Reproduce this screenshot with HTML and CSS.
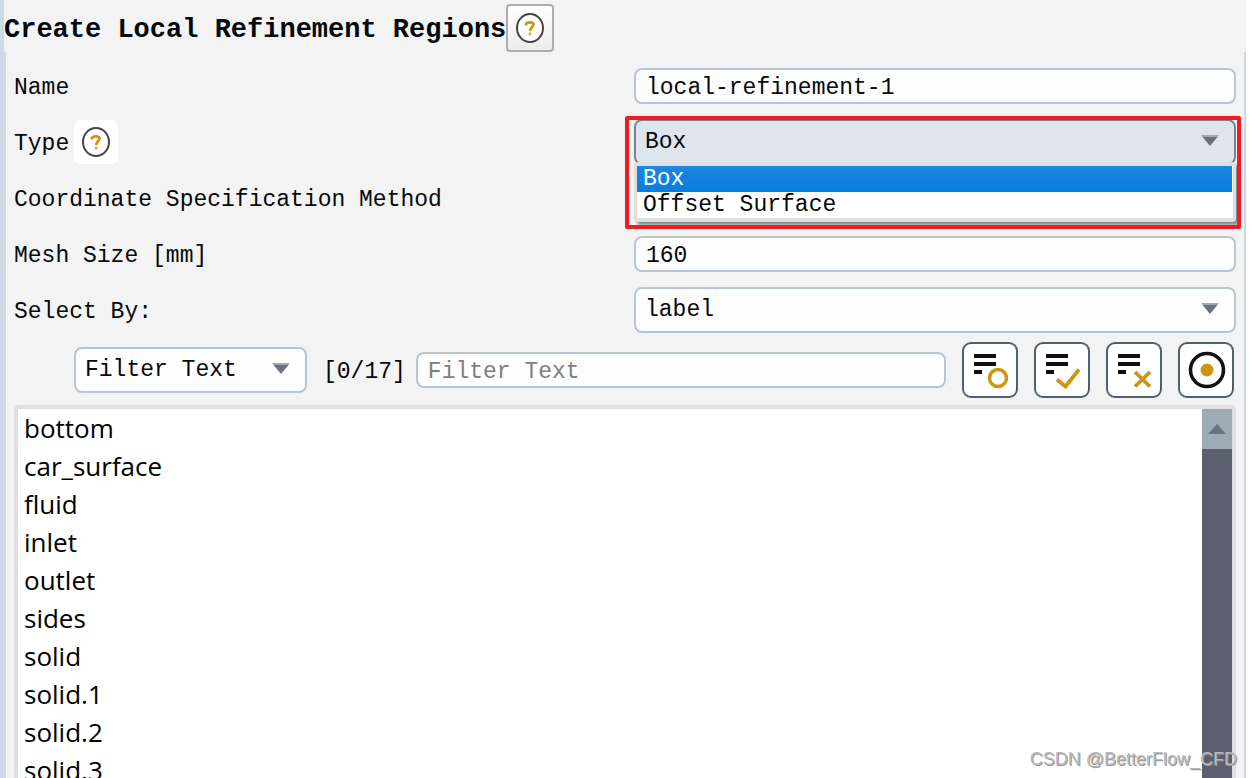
FILE: index.html
```html
<!DOCTYPE html>
<html lang="en">
<head>
<meta charset="utf-8">
<title>Create Local Refinement Regions</title>
<link rel="stylesheet" href="styles.css">
</head>
<body>
<svg class="defs" aria-hidden="true">
  <symbol id="help" viewBox="0 0 32 32">
    <ellipse cx="16" cy="16" rx="13" ry="14" fill="#fff" stroke="#444" stroke-width="2"/>
    <path d="M12 13.500V12C13 10 19.500 9.500 19.500 12.500C19.500 15 16.500 15.500 16 19" fill="none" stroke="#cf9410" stroke-width="2.800"/>
    <path d="M14.800 20.500h2.400v3h-2.400z" fill="#dba93a"/>
  </symbol>
  <symbol id="lines" viewBox="0 0 52 52">
    <path d="M10 10h22v4H10zM10 18h22v4H10zM10 26h8v4h-8z" fill="#111"/>
  </symbol>
</svg>
<div class="panel">
  <header class="head">
    <h1>Create Local Refinement Regions</h1>
    <button class="help help-raised" type="button" aria-label="Help"><svg><use href="#help"/></svg></button>
  </header>
  <main class="body">
    <form class="form">
      <div class="row">
        <label class="text" for="name">Name</label>
        <input class="field" id="name" type="text" value="local-refinement-1">
      </div>
      <div class="row">
        <div class="label-group">
          <label class="text" for="type">Type</label>
          <button class="help help-flat" type="button" aria-label="Type help"><svg><use href="#help"/></svg></button>
        </div>
        <div class="combo">
          <select class="select select-open" id="type"><option>Box</option><option>Offset Surface</option></select>
          <ul class="menu" role="listbox" aria-label="Type">
            <li role="option" aria-selected="true">Box</li>
            <li role="option" aria-selected="false">Offset Surface</li>
          </ul>
          <div class="highlight"></div>
        </div>
      </div>
      <div class="row">
        <span class="text">Coordinate Specification Method</span>
      </div>
      <div class="row">
        <label class="text" for="mesh">Mesh Size [mm]</label>
        <input class="field" id="mesh" type="text" value="160">
      </div>
      <div class="row">
        <label class="text" for="by">Select By:</label>
        <select class="select" id="by"><option>label</option></select>
      </div>
    </form>
    <div class="toolbar">
      <select class="select filter-kind" aria-label="Filter kind"><option>Filter Text</option></select>
      <span class="text count">[0/17]</span>
      <input class="field filter" type="text" placeholder="Filter Text" aria-label="Filter Text">
      <div class="tools">
        <button class="tool" type="button" aria-label="Deselect all"><svg viewBox="0 0 52 52"><use href="#lines"/><circle cx="34" cy="34" r="8.500" fill="none" stroke="#cf9410" stroke-width="3.500"/></svg></button>
        <button class="tool" type="button" aria-label="Select all"><svg viewBox="0 0 52 52"><use href="#lines"/><path d="M21 35.500l8.500 7L43 25.500" fill="none" stroke="#cf9410" stroke-width="3.800"/></svg></button>
        <button class="tool" type="button" aria-label="Clear"><svg viewBox="0 0 52 52"><use href="#lines"/><path d="M27 28l15 14.500M42 28L27 42.500" fill="none" stroke="#cf9410" stroke-width="3.800"/></svg></button>
        <button class="tool" type="button" aria-label="Highlight"><svg viewBox="0 0 52 52"><circle cx="27" cy="26" r="16.500" fill="none" stroke="#111" stroke-width="3.500"/><circle cx="27" cy="26" r="6.500" fill="#cf9410"/></svg></button>
      </div>
    </div>
    <div class="list">
      <ul class="items">
        <li>bottom</li><li>car_surface</li><li>fluid</li><li>inlet</li><li>outlet</li><li>sides</li><li>solid</li><li>solid.1</li><li>solid.2</li><li>solid.3</li>
      </ul>
      <div class="scroll"><button class="scroll-up" type="button" aria-label="Scroll up"></button></div>
    </div>
  </main>
</div>
<div class="credit">CSDN @BetterFlow_CFD</div>
</body>
</html>
```
FILE: styles.css
```css
* { box-sizing: border-box; }
body {
  margin: 0;
  height: 100vh;
  overflow: hidden;
  background: #fff;
  color: #05080c;
  font: 23px/26px "Liberation Mono", monospace;
}
button, input, select { font: inherit; color: inherit; margin: 0; }
ul { list-style: none; margin: 0; padding: 0; }
.defs { position: absolute; width: 0; height: 0; }
.panel { display: flex; flex-direction: column; height: 100%; margin-right: 6px; background: #f3f3f3; }
.head {
  display: flex;
  align-items: center;
  height: 52px;
  padding-top: 4px;
  border-left: 4px solid #cfdae4;
}
h1 { margin: 0; padding-top: 4px; font-size: 27px; line-height: 32px; }
.body {
  flex: 1;
  min-height: 0;
  display: flex;
  flex-direction: column;
  padding: 6px 8px 0 8px;
  border-left: 6px solid #cfd9e5;
  border-right: 2px solid #cfd6e2;
}
.text { padding-top: 4px; }
.help { display: grid; place-items: center; padding: 0; border-radius: 6px; }
.help svg { width: 32px; height: 32px; }
.help-raised { width: 48px; height: 48px; border: 2px solid #adadad; border-radius: 4px; background: linear-gradient(#fff, #ececec); }
.help-flat { width: 44px; height: 44px; border: 0; background: #fff; }
.row { display: grid; grid-template-columns: 620px 1fr; align-items: center; height: 56px; }
.label-group { display: flex; align-items: center; gap: 5px; }
.field, .select {
  width: 100%;
  border: 2px solid #b9c5d3;
  border-radius: 8px;
  background: #fdfdfd;
  outline: 0;
}
.field { height: 36px; padding: 3px 10px 0; }
.field::placeholder { color: #808080; opacity: 1; }
.select {
  appearance: none;
  height: 46px;
  padding: 0 9px;
  background: #fdfdfd url("data:image/svg+xml,%3Csvg xmlns='http://www.w3.org/2000/svg' width='18' height='11'%3E%3Cpath d='M0 0h18l-1.500 2h-15z' fill='%23a4a8b0'/%3E%3Cpath d='M1.500 2h15l-7.500 9z' fill='%236b727e'/%3E%3C/svg%3E") no-repeat right 15px top 14px;
}
.select-open { background-color: #dfe5ed; border-color: #74879a; }
.combo { position: relative; }
.menu {
  position: absolute;
  top: 43px;
  left: 0;
  right: 0;
  z-index: 1;
  padding: 0 1px 0 0;
  border: solid #dfdfdf;
  border-width: 4px 3px;
  border-radius: 4px;
  background: #fff;
  box-shadow: 3px 3px 3px #888;
}
.menu li { padding-left: 6px; }
.menu [aria-selected="true"] { background: linear-gradient(#1c86df, #087ddc); color: #fff; }
.highlight {
  position: absolute;
  inset: -3px -5px -64px -9px;
  z-index: 2;
  border: 4px solid #ee1c25;
  border-radius: 2px;
  pointer-events: none;
}
.toolbar { display: flex; align-items: center; margin: 4px 2px 7px 60px; gap: 16px; }
.filter-kind { width: 233px; }
.count { margin-right: -6px; }
.filter { flex: 1; min-width: 0; }
.tools { display: flex; gap: 16px; }
.tool { width: 56px; height: 56px; padding: 0; border: 2px solid #525f6f; border-radius: 9px; background: #fff; }
.tool svg { display: block; width: 100%; height: 100%; }
.list {
  flex: 1;
  min-height: 0;
  display: flex;
  border: 4px solid #dfdfdf;
  border-bottom: 0;
  border-radius: 5px 5px 0 0;
  background: #fff;
}
.items { flex: 1; overflow: hidden; padding: 0 6px; font: 26px/38px "Open Sans", sans-serif; color: #000; }
.scroll { width: 30px; background: #5a6070; }
.scroll-up { display: grid; place-items: center; width: 100%; height: 40px; padding: 0; border: 0; background: #9cabb4; }
.scroll-up::before { content: ""; border: solid transparent; border-width: 0 9px 10px; border-bottom-color: #6b7280; }
.credit {
  position: absolute;
  right: 15px;
  bottom: 6px;
  font: 18px/26px "Liberation Sans", sans-serif;
  color: #b8b8b8;
  text-shadow: 1px 1px 0 #999;
}
```
